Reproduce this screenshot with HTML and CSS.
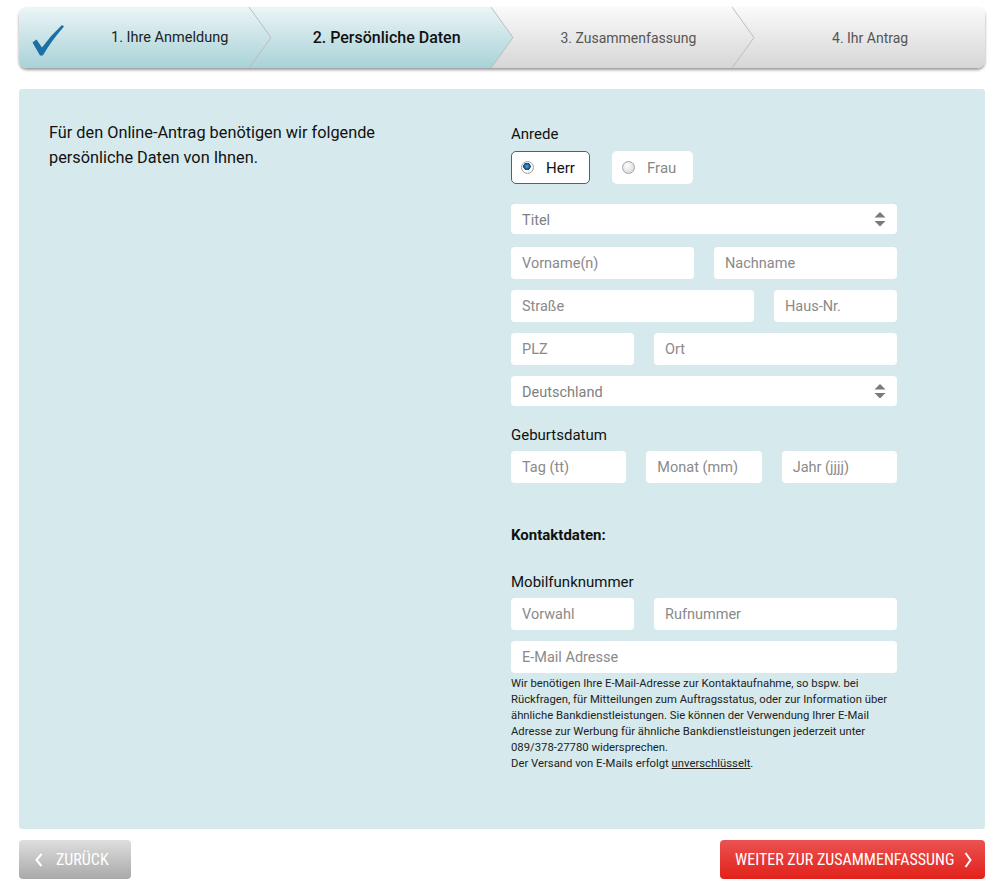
FILE: index.html
```html
<!DOCTYPE html>
<html lang="de">
<head>
    <meta charset="UTF-8">
    <meta name="viewport" content="width=device-width, initial-scale=1.0">
    <title>Persönliche Daten</title>
    <link rel="stylesheet" href="styles.css">
</head>
<body>
<div class="page">
    <ol class="steps">
        <li class="step step-first done">
            <svg class="check" width="36" height="36" viewBox="0 0 36 36">
                <path d="M2.5 19.5 L6.5 16.5 L12 24.5 Q21 12 32 2 L34 3.5 Q22 17 12.8 32.5 L10 32.5 Z" fill="#1b6ea6"/>
            </svg>
            <span class="step-label">1. Ihre Anmeldung</span>
            <svg class="sep" width="23" height="61" viewBox="0 0 23 61">
                <polyline points="0,0 22,30.5 0,61" fill="none" stroke="#bcbcbc" stroke-width="1"/>
            </svg>
        </li>
        <li class="step current">
            <span class="step-label">2. Persönliche Daten</span>
            <svg class="sep" width="23" height="61" viewBox="0 0 23 61">
                <defs>
                    <linearGradient id="gTeal" x1="0" y1="0" x2="0" y2="61" gradientUnits="userSpaceOnUse">
                        <stop offset="0" stop-color="#ebf5f6"/>
                        <stop offset="1" stop-color="#a8d2d8"/>
                    </linearGradient>
                    <linearGradient id="gGray" x1="0" y1="0" x2="0" y2="61" gradientUnits="userSpaceOnUse">
                        <stop offset="0" stop-color="#fafafa"/>
                        <stop offset="1" stop-color="#d6d6d6"/>
                    </linearGradient>
                </defs>
                <polygon points="0,0 23,0 23,61 0,61 22,30.5" fill="url(#gGray)"/>
                <polygon points="0,0 22,30.5 0,61" fill="url(#gTeal)"/>
                <polyline points="0,0 22,30.5 0,61" fill="none" stroke="#bcbcbc" stroke-width="1"/>
            </svg>
        </li>
        <li class="step">
            <span class="step-label">3. Zusammenfassung</span>
            <svg class="sep" width="23" height="61" viewBox="0 0 23 61">
                <polyline points="0,0 22,30.5 0,61" fill="none" stroke="#bcbcbc" stroke-width="1"/>
            </svg>
        </li>
        <li class="step">
            <span class="step-label">4. Ihr Antrag</span>
        </li>
    </ol>

    <form class="panel">
        <p class="intro">Für den Online-Antrag benötigen wir folgende<br>persönliche Daten von Ihnen.</p>

        <div class="fields">
            <div class="label label-first">Anrede</div>
            <div class="radios">
                <label class="radio checked"><span class="dot"></span>Herr</label>
                <label class="radio"><span class="dot"></span>Frau</label>
            </div>

            <div class="select select-title">
                <select class="field">
                    <option>Titel</option>
                </select>
                <svg class="arrows" width="12" height="15" viewBox="0 0 12 15">
                    <polygon points="6,0 11.5,5.5 0.5,5.5" fill="#7a7a7a"/>
                    <polygon points="0.5,9 11.5,9 6,14.5" fill="#7a7a7a"/>
                </svg>
            </div>

            <div class="row row-2">
                <input class="field" placeholder="Vorname(n)">
                <input class="field" placeholder="Nachname">
            </div>
            <div class="row row-street">
                <input class="field" placeholder="Straße">
                <input class="field" placeholder="Haus-Nr.">
            </div>
            <div class="row row-city">
                <input class="field" placeholder="PLZ">
                <input class="field" placeholder="Ort">
            </div>

            <div class="select">
                <select class="field">
                    <option>Deutschland</option>
                </select>
                <svg class="arrows" width="12" height="15" viewBox="0 0 12 15">
                    <polygon points="6,0 11.5,5.5 0.5,5.5" fill="#7a7a7a"/>
                    <polygon points="0.5,9 11.5,9 6,14.5" fill="#7a7a7a"/>
                </svg>
            </div>

            <div class="label label-birth">Geburtsdatum</div>
            <div class="row row-3">
                <input class="field" placeholder="Tag (tt)">
                <input class="field" placeholder="Monat (mm)">
                <input class="field" placeholder="Jahr (jjjj)">
            </div>

            <div class="label heading">Kontaktdaten:</div>

            <div class="label label-phone">Mobilfunknummer</div>
            <div class="row row-city">
                <input class="field" placeholder="Vorwahl">
                <input class="field" placeholder="Rufnummer">
            </div>
            <div class="row row-last">
                <input class="field" placeholder="E-Mail Adresse">
            </div>

            <p class="hint">
                Wir benötigen Ihre E-Mail-Adresse zur Kontaktaufnahme, so bspw. bei<br>
                Rückfragen, für Mitteilungen zum Auftragsstatus, oder zur Information über<br>
                ähnliche Bankdienstleistungen. Sie können der Verwendung Ihrer E-Mail<br>
                Adresse zur Werbung für ähnliche Bankdienstleistungen jederzeit unter<br>
                089/378-27780 widersprechen.<br>
                Der Versand von E-Mails erfolgt <a href="#">unverschlüsselt</a>.
            </p>
        </div>
    </form>

    <div class="actions">
        <button class="btn btn-back" type="button">
            <svg width="8" height="14" viewBox="0 0 8 14"><polyline points="6.5,1 1.5,7 6.5,13" fill="none" stroke="#fff" stroke-width="2"/></svg>
            ZURÜCK
        </button>
        <button class="btn btn-next" type="button">
            WEITER ZUR ZUSAMMENFASSUNG
            <svg width="8" height="16" viewBox="0 0 8 16"><polyline points="1.5,1 6.5,8 1.5,15" fill="none" stroke="#fff" stroke-width="2"/></svg>
        </button>
    </div>
</div>
</body>
</html>
```

FILE: styles.css
```css
body {
    margin: 0;
    font-family: Roboto, "Liberation Sans", sans-serif;
    color: #222;
    background: #fff;
}

.page {
    padding: 7px 12px 5px 19px;
}

/* Schritt-Leiste oben */
.steps {
    display: flex;
    list-style: none;
    margin: 0;
    padding: 0;
    height: 61px;
    border-radius: 8px;
    overflow: hidden;
    box-shadow: 0 2px 3px rgba(0, 0, 0, 0.4);
}

.step {
    flex: 1;
    position: relative;
    display: flex;
    align-items: center;
    justify-content: center;
    padding-left: 12px;
    background: linear-gradient(#fafafa, #d6d6d6);
    color: #555;
    font-size: 14px;
}

.step.done,
.step.current {
    background: linear-gradient(#ebf5f6, #a8d2d8);
}

.step.done {
    color: #222;
    font-size: 14.5px;
}

.step.current {
    color: #111;
    font-size: 16px;
    font-weight: 500;
}

.step-first {
    justify-content: flex-start;
    padding-left: 11px;
}

.step-first .step-label {
    margin-left: 45px;
}

.check {
    margin-top: 6px;
}

.sep {
    position: absolute;
    top: 0;
    right: -12px;
    z-index: 1;
}

/* Formular */
.panel {
    display: grid;
    grid-template-columns: 1fr 386px;
    margin-top: 21px;
    padding: 31px 88px 57px 30px;
    background: #d6eaed;
    border-radius: 3px;
}

.intro {
    margin: 0;
    font-size: 16.3px;
    line-height: 25px;
    color: #111;
}

.label {
    font-size: 15px;
    line-height: 20px;
    color: #111;
}

.label-first {
    margin-top: 4px;
}

.label-birth {
    margin-top: 19px;
    margin-bottom: 6px;
}

.label-phone {
    margin-top: 27px;
    margin-bottom: 6px;
}

.heading {
    margin-top: 42px;
    font-weight: bold;
}

.radios {
    display: flex;
    gap: 22px;
    margin-top: 7px;
}

.radio {
    display: flex;
    align-items: center;
    box-sizing: border-box;
    width: 81px;
    height: 33px;
    padding-left: 10px;
    background: #fff;
    border-radius: 5px;
    font-size: 15px;
    color: #888;
}

.radio.checked {
    width: 79px;
    padding-left: 9px;
    border: 1px solid #2a6d97;
    color: #111;
}

.dot {
    width: 11px;
    height: 11px;
    margin-right: 12px;
    border-radius: 50%;
    border: 1px solid #a5a5a5;
    background: radial-gradient(circle at 40% 35%, #fff, #cfcfcf);
}

.radio.checked .dot {
    background: radial-gradient(circle at 45% 40%, #5aa6dc 0, #1b5f98 2.5px, #12406a 3.5px, #fff 4px, #dedede);
}

.field {
    display: block;
    box-sizing: border-box;
    width: 100%;
    height: 32px;
    margin: 0;
    padding: 0 11px;
    border: 0;
    border-radius: 4px;
    background: #fff;
    font-family: inherit;
    font-size: 14.5px;
    color: #333;
}

.field::placeholder {
    color: #8a8a8a;
}

select.field {
    height: 30px;
    padding-top: 2px;
    appearance: none;
    -webkit-appearance: none;
    color: #7f7f7f;
}

.select {
    position: relative;
    margin-bottom: 11px;
}

.select-title {
    margin-top: 20px;
    margin-bottom: 13px;
}

.arrows {
    position: absolute;
    right: 11px;
    top: 8px;
}

.row {
    display: grid;
    gap: 20px;
    margin-bottom: 11px;
}

.row-2 {
    grid-template-columns: 1fr 1fr;
}

.row-street {
    grid-template-columns: 243px 1fr;
}

.row-city {
    grid-template-columns: 123px 1fr;
}

.row-3 {
    grid-template-columns: repeat(3, 1fr);
    margin-bottom: 0;
}

.row-last {
    margin-bottom: 0;
}

.hint {
    margin: 3px 0 0;
    font-size: 11.3px;
    line-height: 16px;
    color: #222;
    white-space: nowrap;
}

.hint a {
    color: #222;
}

/* Buttons unten */
.actions {
    display: flex;
    justify-content: space-between;
    margin-top: 11px;
}

.btn {
    display: flex;
    align-items: center;
    height: 39px;
    border: 0;
    border-radius: 4px;
    color: #fff;
    font-family: "Liberation Sans Narrow", "Roboto Condensed", Roboto, sans-serif;
    font-size: 16px;
    cursor: pointer;
}

.btn-back {
    width: 112px;
    padding-left: 16px;
    gap: 13px;
    background: linear-gradient(#dedede, #a9a9a9);
}

.btn-next {
    width: 265px;
    padding-left: 15px;
    gap: 10px;
    background: linear-gradient(#ea5252, #e2211a);
}
```
